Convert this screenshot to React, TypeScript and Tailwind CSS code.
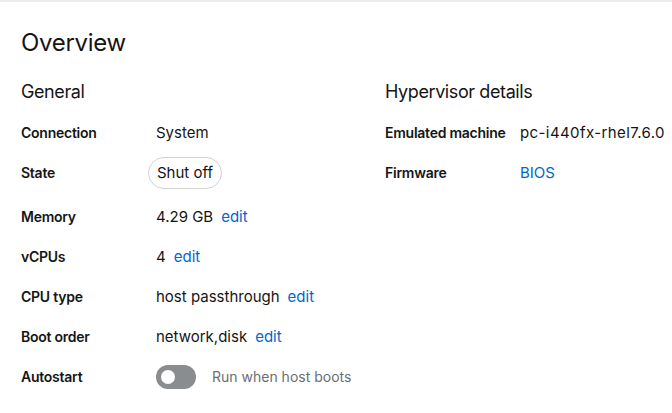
import React from "react";

const Row = ({ label, children, className = "" }: { label: string; children: React.ReactNode; className?: string }) => (
  <div className={`flex h-5 items-center ${className}`}>
    <div className="w-[135px] shrink-0 whitespace-nowrap text-[14px] font-semibold leading-5 tracking-[-0.25px] text-[#151515]">{label}</div>
    <div className="flex items-center whitespace-nowrap text-[15px] leading-5 text-[#151515]">{children}</div>
  </div>
);

const Edit = () => <span className="ml-[8px] text-[#0066cc]">edit</span>;

export default function App() {
  return (
    <div className="min-h-[413px] w-[672px] bg-white" style={{ fontFamily: "Inter, 'Noto Sans', sans-serif" }}>
      <div className="h-[2px] bg-[#ececec]" />
      <div className="px-[21px] pt-[25px]">
        <h1 className="text-[24px] leading-8 tracking-[-0.3px] text-[#151515]">Overview</h1>
        <div className="mt-[21px] flex">
          <div className="w-[364px] shrink-0">
            <h2 className="text-[18px] leading-6 tracking-[-0.4px] text-[#151515]">General</h2>
            <div className="mt-[19px] flex flex-col gap-5">
              <Row label="Connection">System</Row>
              <Row label="State" className="mb-1">
                <span className="-ml-2 rounded-full border border-[#d2d2d2] px-2 py-[5px] leading-5">Shut off</span>
              </Row>
              <Row label="Memory">
                4.29 GB<Edit />
              </Row>
              <Row label="vCPUs">
                4<Edit />
              </Row>
              <Row label="CPU type">
                host passthrough<Edit />
              </Row>
              <Row label="Boot order">
                network,disk<Edit />
              </Row>
              <Row label="Autostart">
                <span className="relative inline-block h-6 w-10 rounded-full bg-[#8a8d90]">
                  <span className="absolute left-[5px] top-[5px] h-[14px] w-[14px] rounded-full bg-white" />
                </span>
                <span className="ml-4 text-[14px] text-[#6a6e73]">Run when host boots</span>
              </Row>
            </div>
          </div>
          <div className="min-w-0 flex-1">
            <h2 className="whitespace-nowrap text-[18px] leading-6 tracking-[-0.4px] text-[#151515]">Hypervisor details</h2>
            <div className="mt-[19px] flex flex-col gap-5">
              <Row label="Emulated machine">
                <span className="tracking-[0.4px]">pc-i440fx-rhel7.6.0</span>
              </Row>
              <Row label="Firmware">
                <span className="text-[#0066cc]">BIOS</span>
              </Row>
            </div>
          </div>
        </div>
      </div>
    </div>
  );
}
